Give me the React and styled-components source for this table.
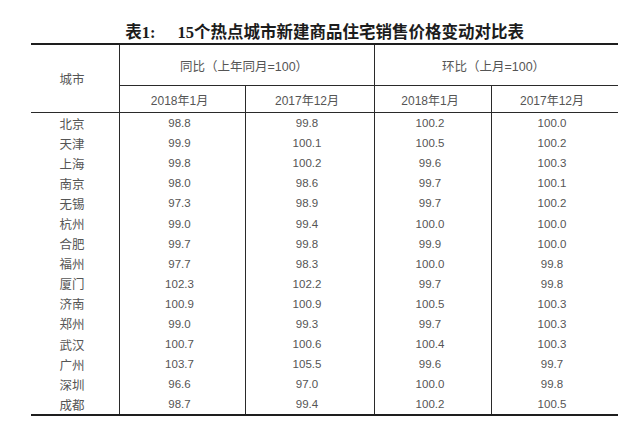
import styled, { createGlobalStyle } from 'styled-components';

const rows = [
  ['北京', '98.8', '99.8', '100.2', '100.0'],
  ['天津', '99.9', '100.1', '100.5', '100.2'],
  ['上海', '99.8', '100.2', '99.6', '100.3'],
  ['南京', '98.0', '98.6', '99.7', '100.1'],
  ['无锡', '97.3', '98.9', '99.7', '100.2'],
  ['杭州', '99.0', '99.4', '100.0', '100.0'],
  ['合肥', '99.7', '99.8', '99.9', '100.0'],
  ['福州', '97.7', '98.3', '100.0', '99.8'],
  ['厦门', '102.3', '102.2', '99.7', '99.8'],
  ['济南', '100.9', '100.9', '100.5', '100.3'],
  ['郑州', '99.0', '99.3', '99.7', '100.3'],
  ['武汉', '100.7', '100.6', '100.4', '100.3'],
  ['广州', '103.7', '105.5', '99.6', '99.7'],
  ['深圳', '96.6', '97.0', '100.0', '99.8'],
  ['成都', '98.7', '99.4', '100.2', '100.5'],
];

const years = ['2018年1月', '2017年12月', '2018年1月', '2017年12月'];

export default function App() {
  return (
    <>
      <GlobalStyle />
      <Page>
        <Title>
          <TitleLabel>表1:</TitleLabel>
          <span>15个热点城市新建商品住宅销售价格变动对比表</span>
        </Title>
        <Grid>
          <Cell $rowSpan={2} $right $bottom $size={12.5}>城市</Cell>
          <Cell $colSpan={2} $right $bottom $size={12.5}>同比（上年同月=100）</Cell>
          <Cell $colSpan={2} $bottom $size={12.5}>环比（上月=100）</Cell>
          {years.map((y, i) => (
            <Cell key={'y' + i} $right={i < 3} $bottom $size={12}>
              {y}
            </Cell>
          ))}
          {rows.map((row) =>
            row.map((v, i) => (
              <Cell key={row[0] + i} $right={i < 4} $size={i === 0 ? 12.5 : 11.5}>
                {v}
              </Cell>
            ))
          )}
        </Grid>
      </Page>
    </>
  );
}

const GlobalStyle = createGlobalStyle`
  * {
    box-sizing: border-box;
  }
  body {
    margin: 0;
    background: #fff;
  }
`;

const Page = styled.div`
  width: 640px;
  height: 422px;
  padding: 22px 0 0 31px;
  background: #fff;
`;

const Title = styled.h1`
  width: 587px;
  margin: 0;
  display: flex;
  justify-content: center;
  height: 21px;
  line-height: 21px;
  font-family: 'Liberation Serif', 'Noto Sans CJK SC', serif;
  font-size: 16.5px;
  font-weight: bold;
  color: #1c1c1c;
`;

const TitleLabel = styled.span`
  margin-right: 22px;
`;

const Grid = styled.div`
  width: 587px;
  display: grid;
  grid-template-columns: 89px 126px 129px 117px 126px;
  grid-template-rows: 41px 27px repeat(15, 20.1px);
  border-top: 2px solid #1e1e1e;
  border-bottom: 2px solid #1e1e1e;
`;

const Cell = styled.div`
  grid-row: span ${(p) => p.$rowSpan || 1};
  grid-column: span ${(p) => p.$colSpan || 1};
  display: flex;
  align-items: center;
  justify-content: center;
  padding-right: 6px;
  border-right: ${(p) => (p.$right ? '1px solid #2a2a2a' : 'none')};
  border-bottom: ${(p) => (p.$bottom ? '1px solid #2a2a2a' : 'none')};
  font-family: 'Liberation Sans', 'Noto Sans CJK SC', sans-serif;
  font-size: ${(p) => p.$size}px;
  color: #555;
  white-space: nowrap;
`;
